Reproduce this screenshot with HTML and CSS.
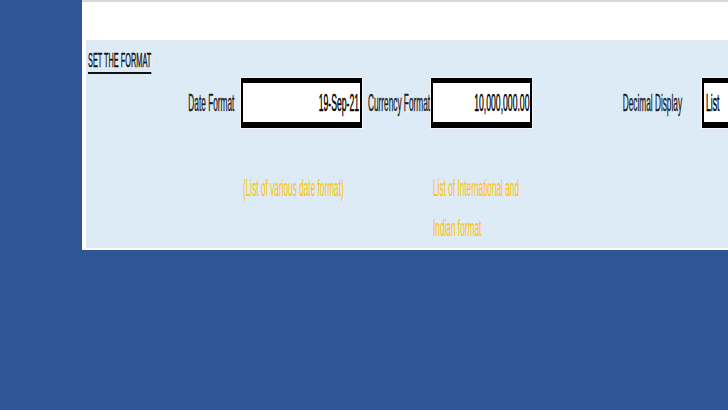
FILE: index.html
```
<!DOCTYPE html>
<html lang="en">
<head>
<meta charset="utf-8">
<title>Set the format</title>
<link rel="stylesheet" href="styles.css">
</head>
<body>
<div class="app">
  <aside class="rail"></aside>
  <main class="sheet">
    <section class="panel">
      <h1 class="title"><span class="sq">SET THE FORMAT</span></h1>
      <div class="grid">
        <div class="lbl lbl-date"><span class="sq sq-r">Date Format</span></div>
        <div class="box"><span class="sq sq-r val">19-Sep-21</span></div>
        <div class="lbl lbl-cur"><span class="sq sq-r">Currency Format</span></div>
        <div class="box"><span class="sq sq-r val">10,000,000.00</span></div>
        <div class="lbl lbl-dec"><span class="sq sq-r">Decimal Display</span></div>
        <div class="box box-left"><span class="sq val">List</span></div>
        <div class="note note-date"><span class="sq">(List of various date format)</span></div>
        <div class="note note-cur"><span class="sq">List of International and<br>Indian format</span></div>
      </div>
    </section>
  </main>
</div>
</body>
</html>
```
FILE: styles.css
```
html, body {
  margin: 0;
  padding: 0;
  height: 100%;
}
body {
  background: #2f5597;
  font-family: "Liberation Sans", Arial, sans-serif;
  overflow: hidden;
}
.app {
  display: flex;
  align-items: flex-start;
  width: 728px;
  height: 410px;
}
.rail {
  width: 82px;
  flex: 0 0 82px;
}
.sheet {
  flex: 1 1 auto;
  min-width: 0;
  background: #ffffff;
  border-top: 2px solid #d7d7d7;
  padding: 38px 0 2px 4px;
}
.panel {
  background: #ddebf7;
  height: 208px;
  overflow: hidden;
  padding-top: 10px;
  box-sizing: border-box;
}
.sq {
  display: inline-block;
  white-space: nowrap;
  transform: scaleX(0.345);
  transform-origin: left center;
}
.sq-r {
  transform-origin: right center;
}
.title {
  margin: 0 0 0 2px;
  font-size: 21px;
  line-height: 20px;
  font-weight: normal;
  color: #111;
  height: 20px;
}
.title .sq {
  transform: scaleX(0.35);
  -webkit-text-stroke: 0.4px #111;
  text-decoration: underline;
  text-decoration-thickness: 2px;
  text-underline-offset: 5px;
}
.grid {
  margin-top: 8px;
  display: grid;
  grid-template-columns: 155px 121px 69px 101px 170px 100px;
  grid-template-rows: 50px auto;
  row-gap: 40px;
}
.lbl {
  display: flex;
  justify-content: flex-end;
  align-items: center;
  font-size: 24px;
  line-height: 22px;
  color: #1c1c1c;
  min-width: 0;
}
.lbl .sq {
  -webkit-text-stroke: 0.4px #1c1c1c;
}
.lbl-date { padding-right: 7px; }
.lbl-cur { padding-right: 1px; }
.lbl-dec { padding-right: 20px; }
.box {
  box-sizing: border-box;
  height: 50px;
  background: #ffffff;
  border-style: solid;
  border-color: #000;
  border-width: 5px 2px 6px 2px;
  display: flex;
  justify-content: flex-end;
  align-items: center;
  padding-right: 1px;
  font-size: 24px;
  line-height: 22px;
  color: #000;
  box-shadow: 0 0 0 1px #f3f7fb;
  min-width: 0;
}
.box-left {
  justify-content: flex-start;
  padding: 0 0 0 2px;
}
.val {
  transform: scaleX(0.36);
  -webkit-text-stroke: 0.5px #000;
}
.note {
  font-size: 24px;
  line-height: 40px;
  color: #ffc000;
  padding-left: 2px;
  min-width: 0;
}
.note-date { grid-column: 2; grid-row: 2; }
.note-cur { grid-column: 4; grid-row: 2; }
```
